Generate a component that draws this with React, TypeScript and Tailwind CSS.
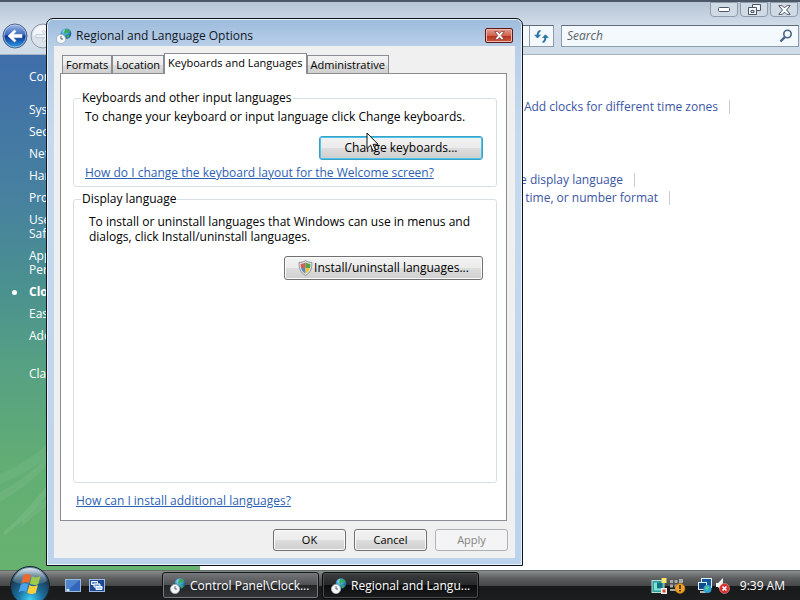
import React, { useState } from 'react';

const sidebarLinks = [
  { lines: ['System'] },
  { lines: ['Security'] },
  { lines: ['Network'] },
  { lines: ['Hard'] },
  { lines: ['Prog'] },
  { lines: ['User', 'Safety'] },
  { lines: ['Appear', 'Personal'] },
  { lines: ['Clock'], active: true },
  { lines: ['Ease'] },
  { lines: ['Additional'] },
];

const tabs = ['Formats', 'Location', 'Keyboards and Languages', 'Administrative'];

const BackButton = () => (
  <svg width="26" height="26" viewBox="0 0 26 26">
    <defs>
      <linearGradient id="back" x1="0" y1="0" x2="0" y2="1">
        <stop offset="0" stopColor="#9dbbe6" />
        <stop offset="0.45" stopColor="#3a69bd" />
        <stop offset="0.5" stopColor="#0d3590" />
        <stop offset="1" stopColor="#2fa0ea" />
      </linearGradient>
    </defs>
    <circle cx="13" cy="13" r="12" fill="url(#back)" stroke="#4d5f86" />
    <circle cx="13" cy="13" r="11" fill="none" stroke="#cfe0f5" strokeOpacity="0.6" />
    <path d="M6 13l6.500-6 1.500 1.500-3 2.900h9v3.200h-9l3 2.900-1.500 1.500z" fill="#fff" stroke="#fff" strokeWidth="0.6" />
  </svg>
);

const ForwardButton = () => (
  <svg width="26" height="26" viewBox="0 0 26 26">
    <circle cx="13" cy="13" r="12" fill="#dbe2ea" stroke="#8d99a8" />
    <path d="M3 12a10 10 0 0120 0c-6 2-14 2-20 0z" fill="#fff" fillOpacity="0.7" />
    <path d="M20 13l-6.500-6-1.500 1.500 3 2.900H6v3.200h9l-3 2.900 1.500 1.500z" fill="#eef2f6" stroke="#b3bdc9" strokeWidth="0.7" />
  </svg>
);

const GlobeIcon = () => (
  <svg width="16" height="16" viewBox="0 0 16 16">
    <defs>
      <radialGradient id="globe" cx="0.4" cy="0.3" r="0.8">
        <stop offset="0" stopColor="#a8ecff" />
        <stop offset="0.5" stopColor="#2d8fc4" />
        <stop offset="1" stopColor="#0b3d78" />
      </radialGradient>
    </defs>
    <circle cx="10" cy="5.500" r="5.300" fill="url(#globe)" />
    <path d="M9 1.500c2-1 4 0 5 2l-1.500 1.500-2-.5-1 2-1.500-2zM10 7.500l3-.5.500 1.500-2 2z" fill="#39a85c" />
    <circle cx="5" cy="11" r="4.600" fill="#f4f6f8" stroke="#a9b1b9" strokeWidth="0.8" />
    <path d="M5 8.200V11h2" fill="none" stroke="#44505c" strokeWidth="0.9" />
  </svg>
);

const ShieldIcon = () => (
  <svg width="15" height="16" viewBox="0 0 15 16">
    <path d="M7.500.6C5.500 2 3.500 2.300 1 2.400 1 8 2 12.500 7.500 15.400 13 12.500 14 8 14 2.400 11.500 2.300 9.500 2 7.500.6z" fill="#e3e5e8" stroke="#858b92" strokeWidth="0.9" />
    <path d="M7.500 2.500C5.800 3.400 4.300 3.700 2.600 3.800c0 1.500.1 2.800.4 4.200h4.500z" fill="#d0604f" />
    <path d="M7.500 2.500c1.700.9 3.200 1.200 4.900 1.300 0 1.500-.1 2.800-.4 4.200H7.500z" fill="#56a34b" />
    <path d="M3 8h4.500v5.700C5 12.300 3.700 10.500 3 8z" fill="#5f87b8" />
    <path d="M12 8H7.500v5.700C10 12.300 11.300 10.500 12 8z" fill="#edc43f" />
  </svg>
);

const StartOrb = () => (
  <svg width="42" height="34" viewBox="0 0 42 34" className="block">
    <defs>
      <radialGradient id="orb" cx="0.5" cy="0.85" r="0.8">
        <stop offset="0" stopColor="#3fd0f5" />
        <stop offset="0.4" stopColor="#1c6f9e" />
        <stop offset="0.8" stopColor="#1b3a52" />
        <stop offset="1" stopColor="#6c8ba0" />
      </radialGradient>
      <linearGradient id="orbShine" x1="0" y1="0" x2="0" y2="1">
        <stop offset="0" stopColor="#e3eef5" stopOpacity="0.9" />
        <stop offset="1" stopColor="#7da2b8" stopOpacity="0.25" />
      </linearGradient>
    </defs>
    <circle cx="21" cy="20" r="19.500" fill="url(#orb)" stroke="#14222c" />
    <path d="M4 15C7 6 13 2 21 2s14 4 17 13c-8 5-26 5-34 0z" fill="url(#orbShine)" />
    <path d="M14.500 9.500c2.500-2.300 5.500-1.800 7.500 0l-2.200 7.500c-2.500-1.500-5-1.300-7.600.5z" fill="#ee6a2c" />
    <path d="M23 10.300c2.800 1.700 5.500 1.500 8.500-.2l-2.200 7.800c-3 1.700-5.700 1.500-8.500-.3z" fill="#9ccb4a" />
    <path d="M11.800 18.700c2.600-1.800 5-1.800 7.600-.3l-2.200 7.700c-2.500-1.600-5-1.400-7.700.3z" fill="#4aa3ea" />
    <path d="M20.400 18.900c2.800 1.700 5.500 1.800 8.500.2l-2.200 7.800c-3 1.600-5.700 1.500-8.500-.2z" fill="#ffcf3a" />
  </svg>
);

const DesktopIcon = () => (
  <svg width="16" height="14" viewBox="0 0 16 14">
    <rect x="0.500" y="0.500" width="15" height="12" fill="#3166ba" stroke="#9db9dc" />
    <path d="M1 1h14L3 11H1z" fill="#6ba0e6" fillOpacity="0.5" />
    <path d="M1.500 10h3v2h-3z" fill="#d8e6f5" />
  </svg>
);

const SwitcherIcon = () => (
  <svg width="16" height="14" viewBox="0 0 16 14">
    <rect x="0.500" y="0.500" width="15" height="12" fill="#1d4694" stroke="#9db9dc" />
    <path d="M2.500 2.500h6v3h-6z" fill="#5f93d6" stroke="#fff" />
    <path d="M5 5h6v3H5z" fill="#5f93d6" stroke="#fff" />
    <path d="M7 7.500h6v3H7z" fill="#b4d3f5" stroke="#fff" />
  </svg>
);

const TrayIcons = () => (
  <div className="flex items-center gap-[10px]">
    <svg width="36" height="18" viewBox="0 0 36 18">
      <rect x="1" y="3.500" width="12" height="12" fill="#2f9c9c" stroke="#b9dcd6" />
      <path d="M3 5.500h3v8H3zM4 11.500h6v2H4z" fill="#7fe0d4" />
      <rect x="6" y="6" width="5" height="5" fill="#14707c" />
      <rect x="10.500" y="1" width="5" height="5" fill="#f4e76b" />
      <rect x="10" y="11" width="6" height="6" fill="#f1f1f1" />
      <rect x="11.500" y="12.500" width="3" height="3" fill="#d8472f" />
      <path d="M19 3h3v3h-3zM23.500 3h3v3h-3zM28 2h4v4h-4zM19 7.500h3v3h-3zM23.500 7.500h3v3h-3zM19 12h6v2h-6z" fill="#a9a9a9" />
      <circle cx="29" cy="11.500" r="5" fill="#eca02a" stroke="#a86a10" strokeWidth="0.6" />
      <path d="M28.200 8h1.600v4h-1.600zM28.200 13h1.600v1.500h-1.600z" fill="#3c2400" />
    </svg>
    <svg width="34" height="18" viewBox="0 0 34 18">
      <rect x="4.500" y="1.500" width="10" height="9" fill="#12589e" stroke="#e3eef8" />
      <rect x="1.500" y="5.500" width="8" height="7" fill="#0d4a8c" stroke="#e3eef8" />
      <path d="M3 15h6" stroke="#e3eef8" strokeWidth="1.500" />
      <circle cx="10.500" cy="12" r="4" fill="#2ba3d8" />
      <path d="M8 11c1-2 3-2 4-1l-1 2-1 2z" fill="#5ccc7a" />
      <path d="M19 6h2l5-5v14l-5-5h-2z" fill="#f3f3f3" />
      <circle cx="27.500" cy="11.500" r="5" fill="#d32f2f" stroke="#f09a9a" strokeWidth="0.6" />
      <path d="M25.500 9.500l4 4M29.500 9.500l-4 4" stroke="#fff" strokeWidth="1.600" />
    </svg>
  </div>
);

const CursorIcon = () => (
  <svg width="13" height="21" viewBox="0 0 13 21">
    <path d="M1 1v15.500l3.600-3.300 2.500 5.800 2.400-1-2.500-5.700H12z" fill="#fff" stroke="#111" />
  </svg>
);

const buttonBase = 'rounded-[3px] border text-center';
const buttonNormal = 'border-[#707070] bg-[linear-gradient(#f3f3f3,#ebebeb_50%,#dddddd_50%,#cfcfcf)] shadow-[inset_0_0_0_1px_#fcfcfc]';

const captionButton = 'flex h-[15px] items-center justify-center rounded-b-sm border border-[#8e9bab] bg-[#d0dae5]';

const ExplorerHeader = () => (
  <header className="border-b border-[#a4b4c4] bg-[linear-gradient(#b4c2d2,#d3deea_50%,#cfdbe7)]">
    <div className="flex h-[22px] items-start justify-end gap-[2px] border-t-2 border-[#4b5666] pr-[2px]">
      <button aria-label="Minimize" className={`${captionButton} w-7`}>
        <svg width="12" height="6" viewBox="0 0 12 6"><rect x="0.500" y="0.500" width="11" height="4" rx="1" fill="#fff" stroke="#4c5668" /></svg>
      </button>
      <button aria-label="Restore" className={`${captionButton} w-7`}>
        <svg width="13" height="11" viewBox="0 0 13 11">
          <path d="M4.500.5h8v6h-8z" fill="#f5f7fa" stroke="#4c5668" />
          <path d="M.5 3.500h8v7h-8z" fill="#f5f7fa" stroke="#4c5668" />
          <path d="M3 6.500h3v2H3z" fill="#d0dae5" stroke="#4c5668" />
        </svg>
      </button>
      <button aria-label="Close" className={`${captionButton} w-7`}>
        <svg width="13" height="10" viewBox="0 0 13 10">
          <path d="M.8.7h3.500l2.200 2.200L8.700.7h3.500L8.500 5l3.700 4.300H8.700L6.500 7.100 4.300 9.300H.8L4.500 5z" fill="#fff" stroke="#4c5668" />
        </svg>
      </button>
    </div>
    <div className="flex h-8 items-start gap-[7px] pr-px pl-[2px]">
      <div className="flex items-center gap-[2px] pt-px">
        <button aria-label="Back"><BackButton /></button>
        <button aria-label="Forward"><ForwardButton /></button>
      </div>
      <div className="mt-[3px] flex h-[22px] flex-1 border border-[#8d9cac] border-t-[#5f6c7a] bg-[#f3f9fd]">
        <div className="flex-1" />
        <button aria-label="Refresh" className="flex w-6 items-center justify-center border-l border-[#8d9cac]">
          <svg width="15" height="15" viewBox="0 0 15 15" fill="none" stroke="#2f74a8" strokeWidth="2">
            <path d="M6.500 2C4 2 3.500 4 3.500 8" /><path d="M.7 5.800L3.500 9l3-3.200" fill="#2f74a8" strokeWidth="1" />
            <path d="M8.500 13c2.500 0 3-2 3-6" /><path d="M8.500 9l3-3.200L14.300 9" fill="#2f74a8" strokeWidth="1" />
          </svg>
        </button>
      </div>
      <label className="mt-[3px] flex h-[22px] w-[238px] items-center border border-[#8d9cac] border-t-[#5f6c7a] bg-[#f3f9fd] pr-[5px] pl-[5px]">
        <input type="text" placeholder="Search" aria-label="Search" className="min-w-0 flex-1 bg-transparent italic outline-none placeholder:text-[#5b6067]" />
        <svg width="14" height="14" viewBox="0 0 14 14" fill="none" stroke="#4a6484">
          <circle cx="8.500" cy="5" r="3.700" strokeWidth="1.600" />
          <path d="M6 7.800L1.500 12.500" strokeWidth="2.400" />
        </svg>
      </label>
    </div>
  </header>
);

const Sidebar = () => (
  <nav className="relative w-[200px] shrink-0 overflow-hidden bg-[linear-gradient(#3f6ea9,#47819f_28%,#4a918f_45%,#56a084_60%,#62ae74_80%,#68b26f)] pt-[15px] text-white">
    <svg className="absolute bottom-0 left-0" width="200" height="200" viewBox="0 0 200 200">
      <path d="M0 104Q25 94 50 72L50 86Q25 104 0 114z" fill="#fff" fillOpacity="0.05" />
      <path d="M0 122Q25 110 50 84L50 92Q28 116 0 132z" fill="#fff" fillOpacity="0.06" />
      <path d="M4 162Q28 140 50 112L50 122Q30 146 4 166z" fill="#fff" fillOpacity="0.08" />
      <path d="M22 150Q36 136 50 126L50 134Q36 144 22 156z" fill="#fff" fillOpacity="0.06" />
    </svg>
    <div className="relative flex flex-col gap-2 pl-[29px] leading-[14px] whitespace-nowrap">
      <a href="#home" className="mb-[11px]">Control</a>
      {sidebarLinks.map(link => (
        <a key={link.lines[0]} href="#category" className={link.active ? 'relative font-bold' : 'relative'}>
          {link.active && <span className="absolute top-[5px] -left-[17px] size-[5px] rounded-full bg-white" />}
          {link.lines.map(line => (
            <span key={line} className="block">{line}</span>
          ))}
        </a>
      ))}
      <a href="#classic" className="mt-4">Classic</a>
    </div>
  </nav>
);

const TaskLink = ({ children }: { children: React.ReactNode }) => (
  <a href="#task" className="border-r border-[#c9cdd2] pr-[11px] leading-[14px] text-[#3b55a5]">{children}</a>
);

const Dialog = () => {
  const [activeTab, setActiveTab] = useState('Keyboards and Languages');

  return (
    <section className="absolute top-[18px] left-[46px] w-[477px] rounded-t-[7px] border border-[#10151c] bg-[linear-gradient(#9dbbdc,#b9cfe8_28px,#c6d9ee_120px,#bcd3ec)] text-black shadow-[inset_0_0_0_1px_#e6f1fa]">
      <div className="flex h-[27px] items-center gap-1 pt-[6px] pr-[9px] pl-[9px]">
        <GlobeIcon />
        <h1 className="flex-1 text-[#111827]">Regional and Language Options</h1>
        <button aria-label="Close" className="flex h-[15px] w-7 items-center justify-center rounded-[2px] border border-[#5a1a1a] bg-[linear-gradient(#e3a091,#cf6350_50%,#b52f1c_50%,#cd5a42)] shadow-[inset_0_0_0_1px_#eeb5a8]">
          <svg width="11" height="9" viewBox="0 0 11 9">
            <path d="M.7.600h3l1.800 1.900L7.300.6h3L7.200 4.500l3.100 3.900h-3L5.500 6.500 3.700 8.400h-3l3.100-3.900z" fill="#fff" stroke="#6b2b2b" strokeWidth="0.700" />
          </svg>
        </button>
      </div>
      <div className="mx-[7px] mb-[7px] bg-[#f0f0f0] pt-[7px] pr-2 pb-[7px] pl-[6px]">
        <div role="tablist" className="flex items-end pl-[2px] text-[11px] leading-4">
          {tabs.map(tab => (
            <button
              key={tab}
              role="tab"
              aria-selected={tab === activeTab}
              onClick={() => setActiveTab(tab)}
              className={
                tab === activeTab
                  ? 'relative -mb-px h-[21px] border border-b-0 border-[#898c95] bg-white px-[3px] pb-[2px]'
                  : 'h-[18px] border border-b-0 border-[#898c95] bg-[linear-gradient(#f3f3f3,#ebebeb_50%,#dddddd_50%,#cfcfcf)] px-[3px]'
              }
            >
              {tab}
            </button>
          ))}
        </div>
        <div className="border border-[#898c95] bg-white pt-4 pr-[9px] pb-[11px] pl-3">
          <fieldset className="rounded-[3px] border border-[#d5dfe5] pr-[13px] pb-[5px] pl-[11px]">
            <legend className="-ml-1 px-px">Keyboards and other input languages</legend>
            <p className="pt-[3px]">To change your keyboard or input language click Change keyboards.</p>
            <div className="mt-[11px] flex justify-end">
              <button className={`${buttonBase} h-6 w-[164px] border-[#3c9fc4] bg-[linear-gradient(#f3f3f3,#ebebeb_50%,#dddddd_50%,#cfcfcf)] shadow-[inset_0_0_0_1px_#4cc5ea]`}>
                Change keyboards...
              </button>
            </div>
            <a href="#layout" className="mt-[5px] block text-[#2d5fb5] underline">How do I change the keyboard layout for the Welcome screen?</a>
          </fieldset>
          <fieldset className="mt-1 h-[292px] rounded-[3px] border border-[#d5dfe5] pr-[13px] pl-[15px]">
            <legend className="-ml-2 px-px">Display language</legend>
            <p className="pt-[7px] leading-[15px]">
              To install or uninstall languages that Windows can use in menus and<br />
              dialogs, click Install/uninstall languages.
            </p>
            <div className="mt-3 flex justify-end">
              <button className={`${buttonBase} ${buttonNormal} flex h-6 w-[199px] items-center justify-center gap-px`}>
                <ShieldIcon />
                Install/uninstall languages...
              </button>
            </div>
          </fieldset>
          <a href="#install" className="mt-[10px] ml-[3px] block text-[#2d5fb5] underline">How can I install additional languages?</a>
        </div>
        <div className="-mr-px mt-2 flex justify-end gap-2 text-[11px]">
          <button className={`${buttonBase} ${buttonNormal} h-[22px] w-[73px]`}>OK</button>
          <button className={`${buttonBase} ${buttonNormal} h-[22px] w-[73px]`}>Cancel</button>
          <button disabled className={`${buttonBase} h-[22px] w-[73px] border-[#adb2b5] bg-[#f4f4f4] text-[#838383]`}>Apply</button>
        </div>
      </div>
    </section>
  );
};

const Taskbar = () => (
  <footer className="relative flex h-[30px] items-center border-t border-[#5d6b60] bg-[linear-gradient(#8a8c8e,#5c5e60_25%,#46484a_50%,#17191b_52%,#1c1e20)] text-white">
    <button aria-label="Start" className="absolute -top-[5px] left-[9px]"><StartOrb /></button>
    <div className="ml-[65px] flex w-[97px] gap-2">
      <button aria-label="Show desktop"><DesktopIcon /></button>
      <button aria-label="Switch between windows"><SwitcherIcon /></button>
    </div>
    <div className="flex flex-1 gap-[3px]">
      <button className="flex h-[27px] w-[157px] items-center gap-1 rounded-[3px] border border-[#151515] bg-[linear-gradient(#75777a,#4c4e51_50%,#242629_50%,#323437)] pl-[7px] shadow-[inset_0_0_0_1px_#77797c]">
        <GlobeIcon />
        Control Panel\Clock...
      </button>
      <button className="flex h-[27px] w-[157px] items-center gap-1 rounded-[3px] border border-[#0a0a0a] bg-[linear-gradient(#3c3e40,#242628_50%,#0c0d0e_50%,#1a1b1c)] pl-2 shadow-[inset_0_0_0_1px_#4a4c4e]">
        <GlobeIcon />
        Regional and Langu...
      </button>
    </div>
    <TrayIcons />
    <time className="pr-[15px] pl-[9px]">9:39 AM</time>
  </footer>
);

const App = () => {
  return (
    <div className="relative flex min-h-screen flex-col overflow-hidden bg-white font-['Open_Sans',sans-serif] text-xs">
      <ExplorerHeader />
      <div className="flex flex-1">
        <Sidebar />
        <main className="flex-1 pt-[45px]">
          <div className="flex w-[530px] justify-end">
            <TaskLink>Add clocks for different time zones</TaskLink>
          </div>
          <div className="mt-[59px] flex w-[435px] justify-end">
            <TaskLink>Change display language</TaskLink>
          </div>
          <div className="mt-1 flex w-[470px] justify-end">
            <TaskLink>Change the date, time, or number format</TaskLink>
          </div>
        </main>
      </div>
      <Taskbar />
      <Dialog />
      <div className="pointer-events-none absolute top-[132px] left-[366px]">
        <CursorIcon />
      </div>
    </div>
  );
};

export default App;
